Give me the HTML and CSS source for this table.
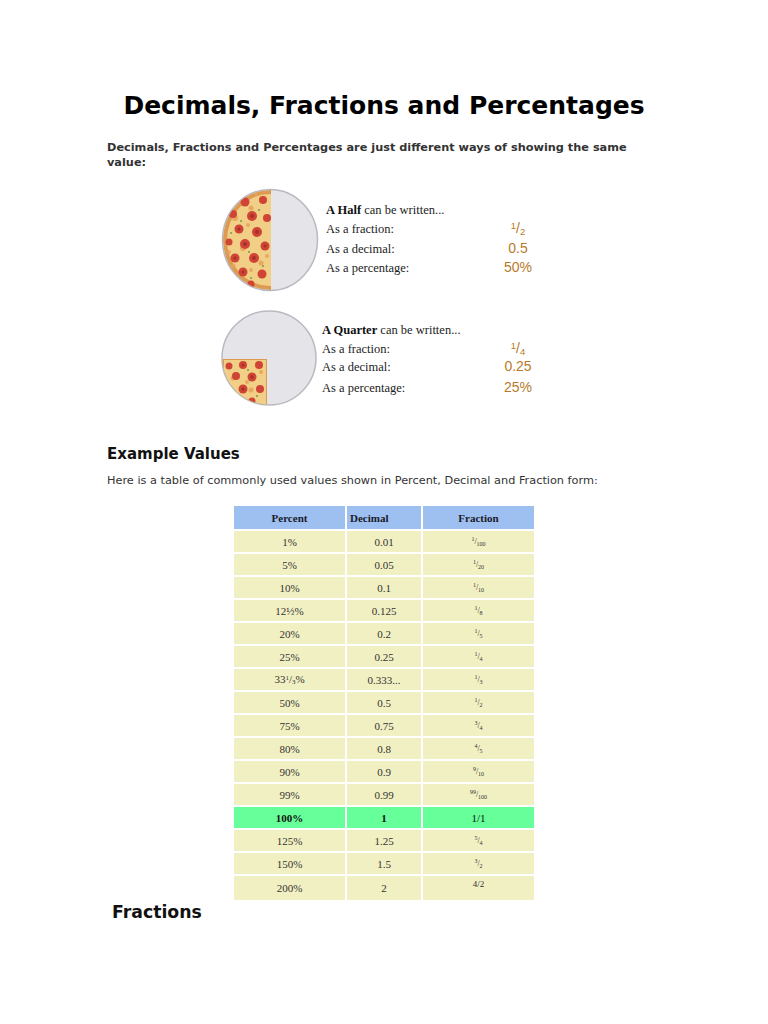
FILE: index.html
```html
<!DOCTYPE html>
<html>
<head>
<meta charset="utf-8">
<link rel="stylesheet" href="styles.css">
</head>
<body>
<div class="page">
  <h1 class="title">Decimals, Fractions and Percentages</h1>
  <p class="intro">Decimals, Fractions and Percentages are just different ways of showing the same value:</p>

  <div class="pizza-block half">
    <svg class="pizza" width="100" height="106" viewBox="0 0 100 106">
      <defs>
        <clipPath id="halfclip"><rect x="0" y="0" width="50" height="106"/></clipPath>
        <clipPath id="plate1"><ellipse cx="49" cy="52" rx="47" ry="50"/></clipPath>
      </defs>
      <ellipse cx="49" cy="52" rx="47.5" ry="50.5" fill="#e5e5e9" stroke="#b9b9c1" stroke-width="1.5"/>
      <g clip-path="url(#plate1)">
        <g clip-path="url(#halfclip)">
          <ellipse cx="49" cy="52" rx="47" ry="50" fill="#dc9a52"/>
          <ellipse cx="49" cy="52" rx="43" ry="46" fill="#f1cf86"/>
          <g fill="#e6a35c" opacity="0.85">
            <circle cx="14" cy="30" r="3"/><circle cx="30" cy="20" r="2.5"/><circle cx="22" cy="60" r="3"/>
            <circle cx="40" cy="75" r="2.5"/><circle cx="12" cy="78" r="2.5"/><circle cx="38" cy="44" r="2.5"/>
            <circle cx="8" cy="64" r="2"/><circle cx="27" cy="37" r="2"/><circle cx="46" cy="68" r="2"/>
            <circle cx="30" cy="82" r="2"/><circle cx="35" cy="6" r="2"/><circle cx="16" cy="92" r="2"/>
          </g>
          <g fill="#cf4434">
            <circle cx="24" cy="14" r="4.5"/><circle cx="42" cy="12" r="4"/>
            <circle cx="12" cy="26" r="4"/><circle cx="31" cy="28" r="5"/><circle cx="46" cy="30" r="4"/>
            <circle cx="18" cy="41" r="4.5"/><circle cx="36" cy="44" r="5"/>
            <circle cx="8" cy="54" r="3.5"/><circle cx="24" cy="56" r="5"/><circle cx="44" cy="58" r="4.5"/>
            <circle cx="14" cy="70" r="4.5"/><circle cx="33" cy="70" r="5"/>
            <circle cx="22" cy="84" r="4.5"/><circle cx="41" cy="86" r="4.5"/><circle cx="30" cy="96" r="3.5"/>
          </g>
          <g fill="#a8302a">
            <circle cx="31" cy="28" r="2"/><circle cx="36" cy="44" r="2"/><circle cx="24" cy="56" r="2"/>
            <circle cx="33" cy="70" r="2"/><circle cx="14" cy="70" r="1.5"/><circle cx="18" cy="41" r="1.5"/>
            <circle cx="22" cy="84" r="1.5"/><circle cx="44" cy="58" r="1.5"/>
          </g>
          <g fill="#7a9a40">
            <circle cx="20" cy="33" r="1"/><circle cx="38" cy="22" r="1"/><circle cx="28" cy="64" r="1"/>
            <circle cx="10" cy="45" r="1"/><circle cx="42" cy="78" r="1"/><circle cx="30" cy="90" r="1"/>
          </g>
        </g>
      </g>
    </svg>
    <div class="facts">
      <div class="fact-head"><b>A Half</b> can be written...</div>
      <div class="fact"><span class="label">As a fraction:</span><span class="val"><sup>1</sup>/<sub>2</sub></span></div>
      <div class="fact"><span class="label">As a decimal:</span><span class="val">0.5</span></div>
      <div class="fact"><span class="label">As a percentage:</span><span class="val">50%</span></div>
    </div>
  </div>

  <div class="pizza-block quarter">
    <svg class="pizza" width="98" height="98" viewBox="0 0 98 98">
      <defs>
        <clipPath id="plate2"><ellipse cx="48" cy="48" rx="46.5" ry="46.5"/></clipPath>
      </defs>
      <ellipse cx="48" cy="48" rx="47" ry="47" fill="#e5e5e9" stroke="#b9b9c1" stroke-width="1.5"/>
      <g clip-path="url(#plate2)">
        <rect x="0" y="49" width="46" height="49" fill="#dc9a52"/>
        <rect x="3" y="50" width="42" height="45" fill="#f1cf86"/>
        <g fill="#e6a35c" opacity="0.85">
          <circle cx="12" cy="68" r="2.5"/><circle cx="30" cy="80" r="2.5"/><circle cx="40" cy="62" r="2"/>
          <circle cx="6" cy="88" r="2"/><circle cx="26" cy="72" r="2"/>
        </g>
        <g fill="#cf4434">
          <circle cx="8" cy="56" r="3.5"/><circle cx="22" cy="55" r="4"/><circle cx="38" cy="55" r="4"/>
          <circle cx="15" cy="66" r="4"/><circle cx="31" cy="67" r="4.5"/>
          <circle cx="8" cy="79" r="3.5"/><circle cx="22" cy="79" r="4.5"/><circle cx="39" cy="79" r="4"/>
          <circle cx="16" cy="91" r="3.5"/><circle cx="31" cy="91" r="3.5"/>
        </g>
        <g fill="#a8302a">
          <circle cx="31" cy="67" r="1.8"/><circle cx="22" cy="79" r="1.8"/><circle cx="22" cy="55" r="1.5"/>
        </g>
        <g fill="#7a9a40">
          <circle cx="27" cy="60" r="1"/><circle cx="12" cy="86" r="1"/><circle cx="36" cy="86" r="1"/>
        </g>
      </g>
    </svg>
    <div class="facts">
      <div class="fact-head"><b>A Quarter</b> can be written...</div>
      <div class="fact"><span class="label">As a fraction:</span><span class="val"><sup>1</sup>/<sub>4</sub></span></div>
      <div class="fact"><span class="label">As a decimal:</span><span class="val">0.25</span></div>
      <div class="fact"><span class="label">As a percentage:</span><span class="val">25%</span></div>
    </div>
  </div>

  <h2 class="section">Example Values</h2>
  <p class="para">Here is a table of commonly used values shown in Percent, Decimal and Fraction form:</p>

  <table class="values">
    <thead>
      <tr><th class="c1">Percent</th><th class="c2 left">Decimal</th><th class="c3">Fraction</th></tr>
    </thead>
    <tbody>
      <tr><td>1%</td><td>0.01</td><td class="fr"><sup>1</sup>/<sub>100</sub></td></tr>
      <tr><td>5%</td><td>0.05</td><td class="fr"><sup>1</sup>/<sub>20</sub></td></tr>
      <tr><td>10%</td><td>0.1</td><td class="fr"><sup>1</sup>/<sub>10</sub></td></tr>
      <tr><td>12½%</td><td>0.125</td><td class="fr"><sup>1</sup>/<sub>8</sub></td></tr>
      <tr><td>20%</td><td>0.2</td><td class="fr"><sup>1</sup>/<sub>5</sub></td></tr>
      <tr><td>25%</td><td>0.25</td><td class="fr"><sup>1</sup>/<sub>4</sub></td></tr>
      <tr><td>33<sup class="in">1</sup>/<sub class="in">3</sub>%</td><td>0.333...</td><td class="fr"><sup>1</sup>/<sub>3</sub></td></tr>
      <tr><td>50%</td><td>0.5</td><td class="fr"><sup>1</sup>/<sub>2</sub></td></tr>
      <tr><td>75%</td><td>0.75</td><td class="fr"><sup>3</sup>/<sub>4</sub></td></tr>
      <tr><td>80%</td><td>0.8</td><td class="fr"><sup>4</sup>/<sub>5</sub></td></tr>
      <tr><td>90%</td><td>0.9</td><td class="fr"><sup>9</sup>/<sub>10</sub></td></tr>
      <tr><td>99%</td><td>0.99</td><td class="fr"><sup>99</sup>/<sub>100</sub></td></tr>
      <tr class="hl"><td><b>100%</b></td><td><b>1</b></td><td>1/1</td></tr>
      <tr><td>125%</td><td>1.25</td><td class="fr"><sup>5</sup>/<sub>4</sub></td></tr>
      <tr><td>150%</td><td>1.5</td><td class="fr"><sup>3</sup>/<sub>2</sub></td></tr>
      <tr class="last"><td>200%</td><td>2</td><td class="top">4/2</td></tr>
    </tbody>
  </table>

  <h2 class="section fractions">Fractions</h2>
</div>
</body>
</html>
```

FILE: styles.css
```css
* { box-sizing: border-box; }
html, body { margin: 0; padding: 0; background: #ffffff; }
body { font-family: "DejaVu Sans", Verdana, sans-serif; color: #333333; }

.page {
  width: 768px;
  padding: 89px 0 40px 107px;
}

.title {
  margin: 0 0 0 -107px;
  width: 768px;
  text-align: center;
  font-size: 25px;
  line-height: 34px;
  font-weight: bold;
  color: #000000;
}

.intro {
  margin: 17px 0 0 0;
  width: 545px;
  font-size: 11.3px;
  line-height: 15px;
  font-weight: bold;
  color: #333333;
}

.pizza-block {
  display: flex;
  align-items: flex-start;
  margin-left: 114px;
}
.pizza-block.half { margin-top: 18px; }
.pizza-block.quarter { margin-top: 16px; }

.pizza { display: block; flex: none; }

.facts {
  font-family: "Liberation Serif", "Times New Roman", serif;
  font-size: 12.5px;
  color: #222222;
}
.half .facts { margin: 13px 0 0 5px; }
.half .label { width: 157px; }
.quarter .facts { margin: 11px 0 0 3px; }
.quarter .label { width: 161px; }

.fact-head { height: 19px; line-height: 19px; }
.fact-head b { color: #111; }
.fact {
  display: flex;
  align-items: baseline;
  height: 19.5px;
  line-height: 19.5px;
}
.quarter .fact:nth-child(2) { height: 18px; line-height: 18px; }
.quarter .fact:nth-child(4) { height: 21px; line-height: 21px; }
.val {
  width: 70px;
  text-align: center;
  font-family: "Liberation Sans", Arial, sans-serif;
  font-size: 14px;
  line-height: 1;
  color: #b87a2a;
}
.val sup, .val sub { font-size: 9.5px; line-height: 0; }
.val sup { vertical-align: 4px; }
.val sub { vertical-align: -2px; }

.section {
  margin: 36px 0 0 0;
  font-size: 15px;
  line-height: 20px;
  font-weight: bold;
  color: #111111;
}

.para {
  margin: 9px 0 0 0;
  font-size: 11.3px;
  line-height: 15px;
  color: #333333;
}

.values {
  margin: 16px 0 0 125px;
  border-collapse: separate;
  border-spacing: 2px;
  font-family: "Liberation Serif", "Times New Roman", serif;
  font-size: 11px;
  color: #333333;
}
.values th {
  background: #9ec0f0;
  height: 23px;
  padding: 0;
  font-weight: bold;
  color: #1a1a2a;
  text-align: center;
}
.values th.left { text-align: left; padding-left: 3px; }
.values .c1 { width: 111px; }
.values .c2 { width: 74px; }
.values .c3 { width: 111px; }
.values td {
  background: #f1f0c2;
  height: 21px;
  padding: 0;
  text-align: center;
  vertical-align: middle;
}
.values tr.hl td { background: #66ff99; color: #111; }
.values tr.last td { height: 24px; }
.values td.top { vertical-align: top; padding-top: 3px; font-size: 9px; }
.values td.fr { font-size: 8px; }
.values td.fr sup { font-size: 6px; vertical-align: 3px; }
.values td.fr sub { font-size: 6px; vertical-align: -2px; }
.values sup.in { font-size: 7px; vertical-align: 3px; }
.values sub.in { font-size: 7px; vertical-align: -1px; }

.section.fractions {
  margin: -1px 0 0 5px;
  font-size: 17.3px;
  line-height: 22px;
}
```
